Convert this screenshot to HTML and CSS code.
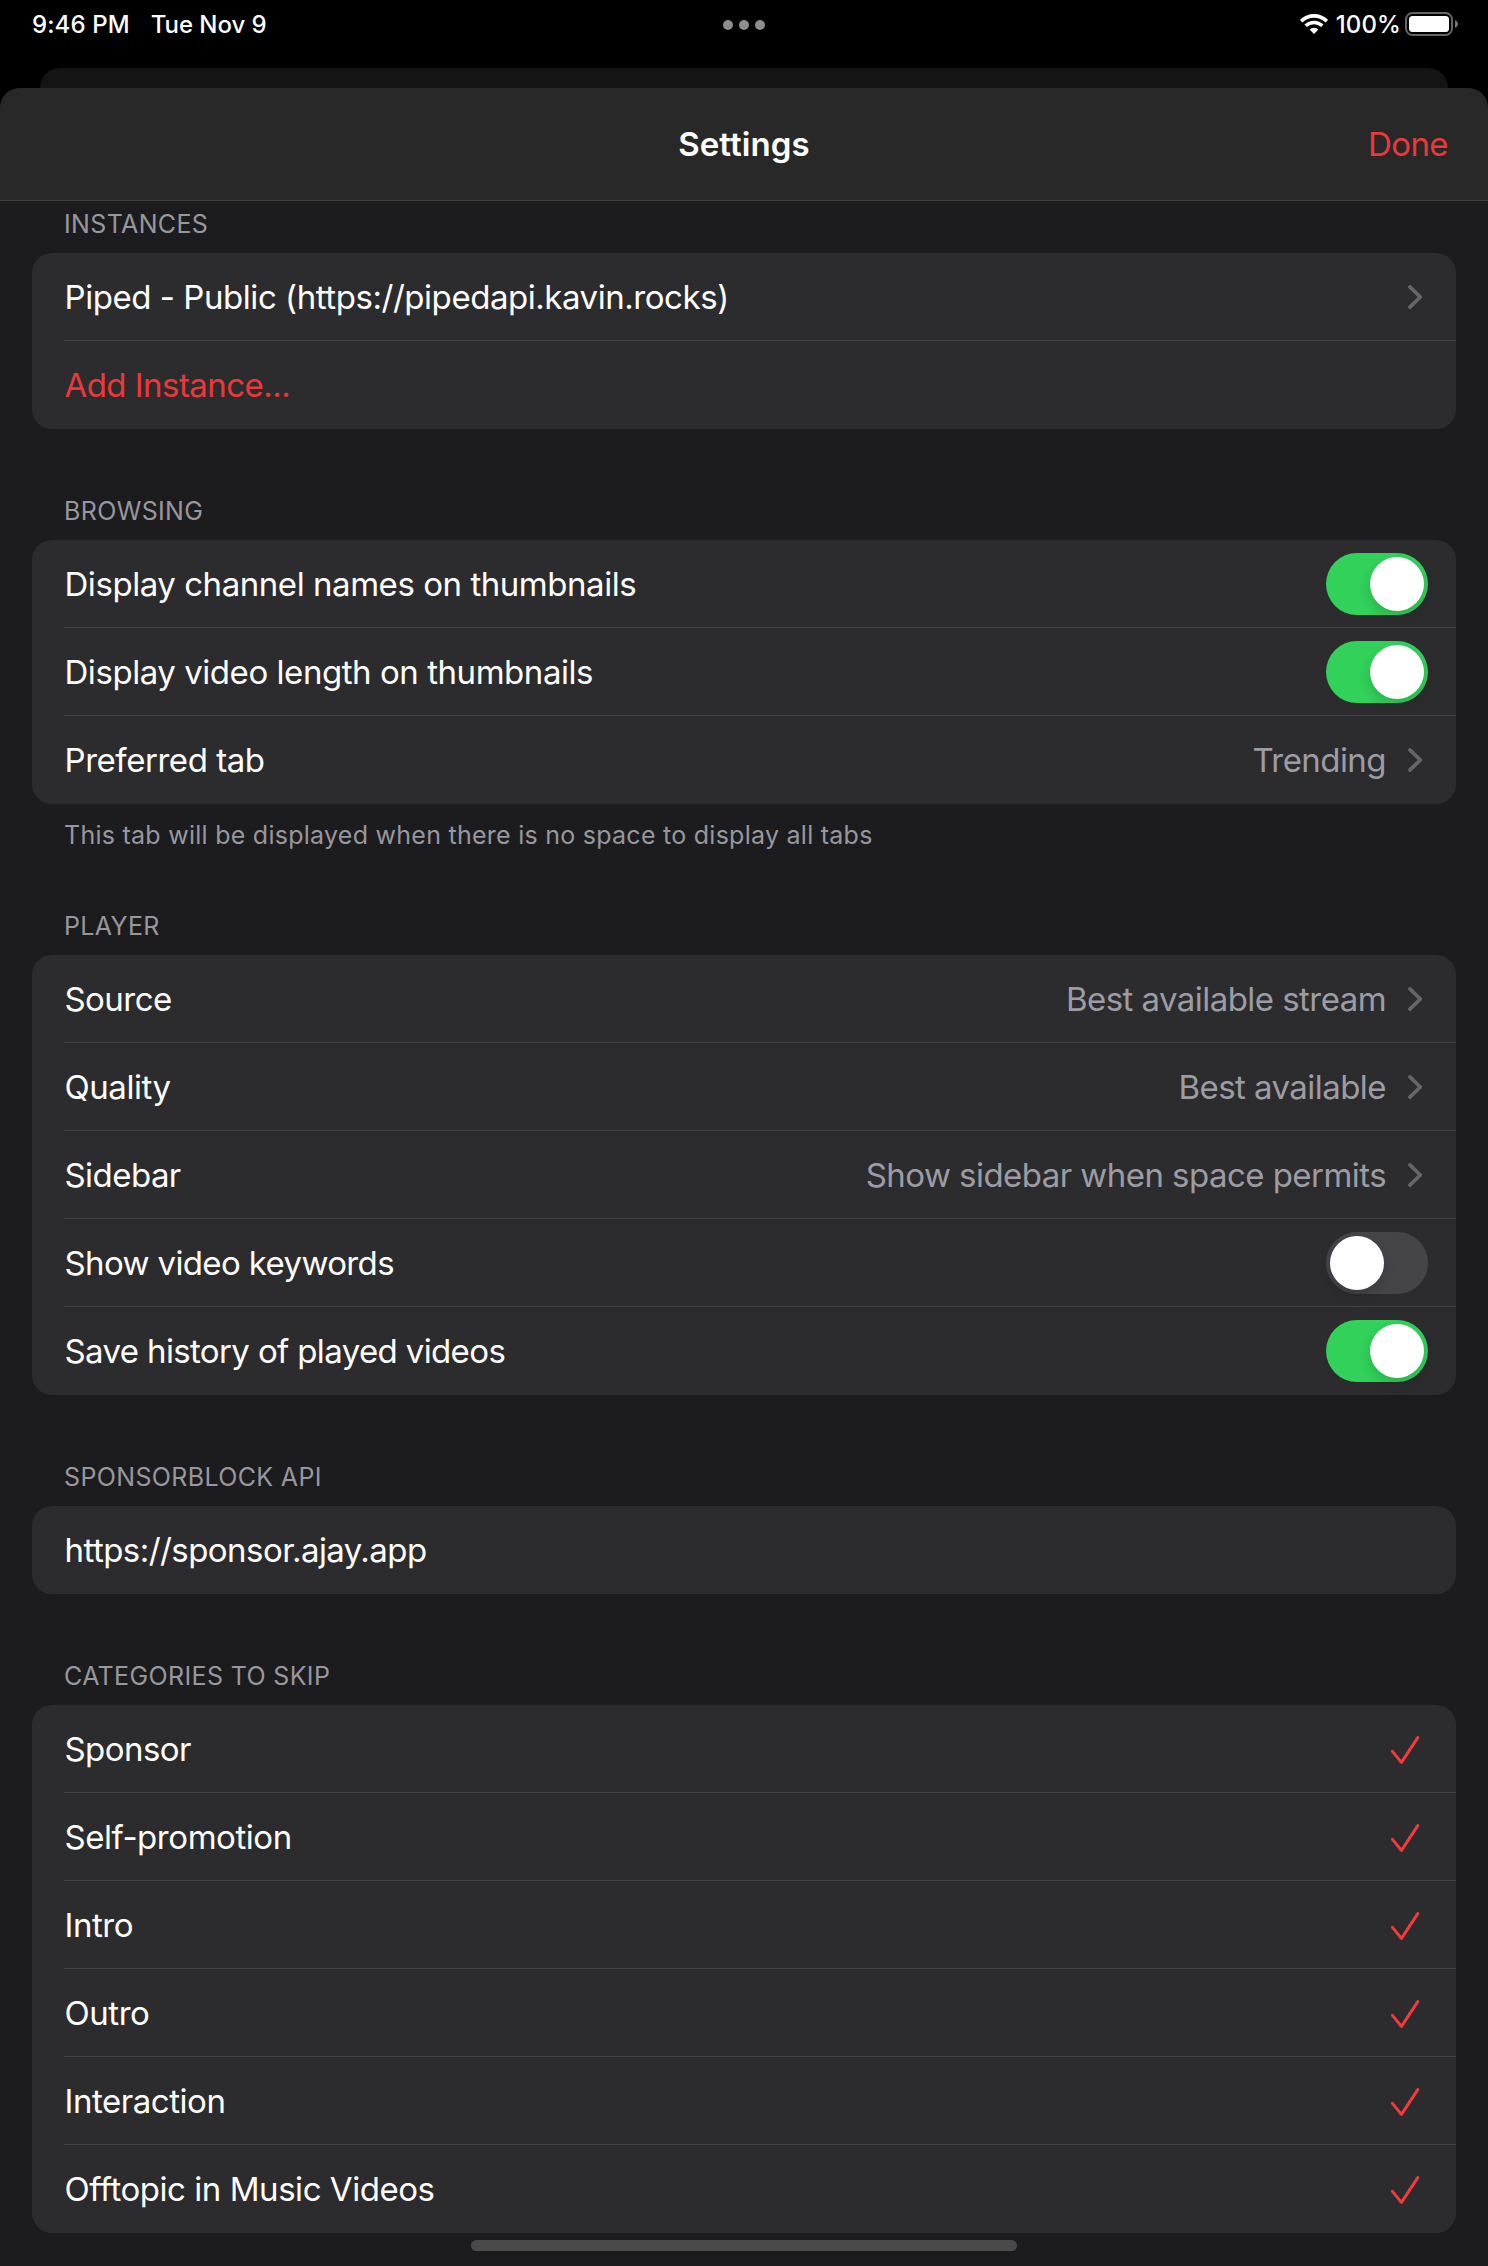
FILE: index.html
```html
<!DOCTYPE html>
<html lang="en">
<head>
<meta charset="utf-8">
<title>Settings</title>
<link rel="stylesheet" href="styles.css">
</head>
<body>
<svg class="defs" aria-hidden="true">
  <symbol id="chevron" viewBox="0 0 14 24"><path d="M1.9 1.9 12.3 12 1.9 22.1" fill="none" stroke="currentColor" stroke-width="3.6" stroke-linecap="round" stroke-linejoin="round"/></symbol>
  <symbol id="check" viewBox="0 0 30 30"><path d="M2.4 16.4 11.5 27.4 27.8 2.6" fill="none" stroke="currentColor" stroke-width="3" stroke-linecap="round" stroke-linejoin="round"/></symbol>
</svg>

<header class="status">
  <div class="status-left"><span>9:46 PM</span><span class="date">Tue Nov 9</span></div>
  <div class="dots"><i></i><i></i><i></i></div>
  <div class="status-right">
    <svg class="wifi" viewBox="0 0 28 20">
      <g fill="none" stroke="#fff" stroke-width="3.6">
        <path d="M1.1 7.1A18.6 18.6 0 0 1 26.9 7.1"/>
        <path d="M5.7 11.8A12 12 0 0 1 22.3 11.8"/>
      </g>
      <path d="M14 20 9.6 15.6A6.4 6.4 0 0 1 18.4 15.6Z" fill="#fff"/>
    </svg>
    <span>100%</span>
    <svg class="battery" viewBox="0 0 54 24">
      <rect x="1" y="1" width="46" height="22" rx="6.5" fill="none" stroke="#656565" stroke-width="2"/>
      <rect x="4" y="4" width="40" height="16" rx="3.5" fill="#fff"/>
      <path d="M50 8.2C52 8.8 53 10.2 53 12S52 15.2 50 15.8Z" fill="#737373"/>
    </svg>
  </div>
</header>

<div class="back-sheet"></div>
<main class="sheet">
  <div class="navbar">
    <span></span>
    <h1>Settings</h1>
    <span class="done">Done</span>
  </div>

  <div class="content">
    <section>
      <h2>INSTANCES</h2>
      <div class="card">
        <div class="row"><span>Piped - Public (https://pipedapi.kavin.rocks)</span><svg class="chevron"><use href="#chevron"/></svg></div>
        <div class="row accent tight"><span>Add Instance...</span></div>
      </div>
    </section>

    <section>
      <h2>BROWSING</h2>
      <div class="card">
        <div class="row"><span>Display channel names on thumbnails</span><span class="toggle on"></span></div>
        <div class="row"><span>Display video length on thumbnails</span><span class="toggle on"></span></div>
        <div class="row"><span>Preferred tab</span><span class="value">Trending</span><svg class="chevron"><use href="#chevron"/></svg></div>
      </div>
      <p class="note">This tab will be displayed when there is no space to display all tabs</p>
    </section>

    <section>
      <h2>PLAYER</h2>
      <div class="card">
        <div class="row tight"><span>Source</span><span class="value">Best available stream</span><svg class="chevron"><use href="#chevron"/></svg></div>
        <div class="row"><span>Quality</span><span class="value">Best available</span><svg class="chevron"><use href="#chevron"/></svg></div>
        <div class="row tight"><span>Sidebar</span><span class="value">Show sidebar when space permits</span><svg class="chevron"><use href="#chevron"/></svg></div>
        <div class="row tighter"><span>Show video keywords</span><span class="toggle"></span></div>
        <div class="row tighter"><span>Save history of played videos</span><span class="toggle on"></span></div>
      </div>
    </section>

    <section>
      <h2>SPONSORBLOCK API</h2>
      <div class="card">
        <div class="row tight"><span>https://sponsor.ajay.app</span></div>
      </div>
    </section>

    <section>
      <h2>CATEGORIES TO SKIP</h2>
      <div class="card">
        <div class="row tight"><span>Sponsor</span><svg class="check"><use href="#check"/></svg></div>
        <div class="row"><span>Self-promotion</span><svg class="check"><use href="#check"/></svg></div>
        <div class="row"><span>Intro</span><svg class="check"><use href="#check"/></svg></div>
        <div class="row"><span>Outro</span><svg class="check"><use href="#check"/></svg></div>
        <div class="row"><span>Interaction</span><svg class="check"><use href="#check"/></svg></div>
        <div class="row"><span>Offtopic in Music Videos</span><svg class="check"><use href="#check"/></svg></div>
      </div>
    </section>
  </div>
</main>
<div class="home-indicator"></div>
</body>
</html>
```
FILE: styles.css
```css
* { box-sizing: border-box; }

body {
  margin: 0;
  height: 2266px;
  display: flex;
  flex-direction: column;
  position: relative;
  overflow: hidden;
  background: #000;
  color: #fff;
  font-family: Inter, "Liberation Sans", sans-serif;
}

h1, h2, p { margin: 0; }

.defs { display: none; }

.status {
  height: 68px;
  padding: 0 29px 20px;
  display: grid;
  grid-template-columns: 1fr auto 1fr;
  align-items: center;
  font-size: 24px;
  font-weight: 500;
  letter-spacing: 0.1px;
}
.status-left { display: flex; gap: 21px; padding-left: 3px; }
.date { letter-spacing: -0.05px; }
.dots { display: flex; gap: 6px; padding-top: 2px; }
.dots i { width: 10px; height: 10px; border-radius: 50%; background: #8e8e8e; }
.status-right { display: flex; align-items: center; justify-content: flex-end; }
.wifi { width: 28px; height: 20px; margin-right: 8px; }
.battery { width: 54px; height: 24px; margin-left: 4px; }

.back-sheet {
  height: 20px;
  margin: 0 40px;
  border-radius: 20px 20px 0 0;
  background: #141414;
}

.sheet {
  flex: 1;
  border-radius: 20px 20px 0 0;
  overflow: hidden;
  background: #1c1c1e;
}

.navbar {
  height: 113px;
  padding: 0 40px;
  display: grid;
  grid-template-columns: 1fr auto 1fr;
  align-items: center;
  background: #282828;
  border-bottom: 1px solid #3f3f40;
  font-size: 33px;
}
.navbar h1 { font-size: 33px; font-weight: 600; letter-spacing: 0.1px; }
.done { justify-self: end; color: #eb383b; letter-spacing: -0.6px; }

.content {
  padding: 8px 32px 0;
  display: flex;
  flex-direction: column;
  gap: 67px;
}

h2, .note {
  padding: 0 32px;
  font-size: 25px;
  line-height: 30px;
  font-weight: 400;
  color: #98979e;
}
h2 { padding-bottom: 14px; letter-spacing: 0.36px; }
.note { padding-top: 16px; margin-bottom: -6px; letter-spacing: 0.26px; }

.card {
  border-radius: 20px;
  overflow: hidden;
  background: #2c2c2e;
}

.row {
  height: 88px;
  margin-left: 32px;
  padding-right: 28px;
  display: flex;
  align-items: center;
  font-size: 33px;
  letter-spacing: -0.45px;
  border-bottom: 1px solid #434345;
}
.row:last-child { border-bottom-color: transparent; }
.row > span:first-child { flex: 1; padding-left: 0.5px; }
.tight { letter-spacing: -0.55px; }
.tighter { letter-spacing: -0.63px; }
.accent { color: #eb383b; }

.value { color: #9d9ca4; letter-spacing: -0.55px; }
.chevron { width: 14px; height: 24px; margin: 0 6px 0 22px; color: #66656b; }
.check { width: 30px; height: 30px; margin: 0 8px 0 0; color: #f23b3d; position: relative; top: 1px; }

.toggle {
  width: 102px;
  height: 62px;
  padding: 4px;
  display: flex;
  border-radius: 31px;
  background: #454449;
}
.toggle::before {
  content: "";
  width: 54px;
  height: 54px;
  border-radius: 50%;
  background: #fff;
  box-shadow: 0 5px 12px rgba(0, 0, 0, 0.16);
}
.toggle.on { justify-content: flex-end; background: #31d15a; }

.home-indicator {
  position: absolute;
  left: 471px;
  bottom: 15px;
  width: 546px;
  height: 11px;
  border-radius: 6px;
  background: #4a4a4a;
}
```
